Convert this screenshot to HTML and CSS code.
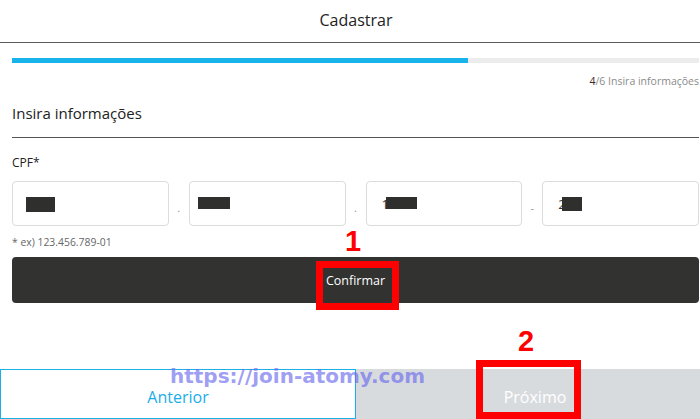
FILE: index.html
```html
<!DOCTYPE html>
<html lang="pt">
<head>
<meta charset="utf-8">
<title>Cadastrar</title>
<link rel="stylesheet" href="styles.css">
</head>
<body>
<header class="topbar"><h1 class="title">Cadastrar</h1></header>
<main class="content">
  <div class="progress"><div class="progress-fill" style="width:66.4%"></div></div>
  <p class="step"><b>4</b>/6 Insira informações</p>
  <h2 class="section-title">Insira informações</h2>
  <label class="field-label">CPF*</label>
  <div class="cpf-row">
    <div class="cpf-box"><span class="mask m1"></span></div>
    <span class="sep">.</span>
    <div class="cpf-box"><span class="mask m2"></span></div>
    <span class="sep">.</span>
    <div class="cpf-box"><span class="digit d3">1</span><span class="mask m3"></span></div>
    <span class="sep">-</span>
    <div class="cpf-box"><span class="digit d4">2</span><span class="mask m4"></span></div>
  </div>
  <p class="hint">* ex) 123.456.789-01</p>
  <button class="confirm">Confirmar</button>
</main>
<footer class="nav">
  <button class="prev">Anterior</button>
  <button class="next">Próximo</button>
</footer>
<div class="mark n1">1</div>
<div class="mark n2">2</div>
<div class="hl h1"></div>
<div class="hl h2"></div>
<div class="watermark">https://join-atomy.com</div>
</body>
</html>
```
FILE: styles.css
```css
* { box-sizing: border-box; }
html, body { margin: 0; padding: 0; }
body {
  width: 700px;
  height: 419px;
  overflow: hidden;
  position: relative;
  display: flex;
  flex-direction: column;
  background: #fff;
  font-family: "Open Sans", "Noto Sans", sans-serif;
  color: #222;
}
.topbar {
  height: 43px;
  border-bottom: 1px solid #5a5a5a;
  display: flex;
  align-items: center;
  justify-content: center;
  padding: 0 0 3px 12px;
}
.title {
  margin: 0;
  font-size: 16px;
  font-weight: 400;
  color: #222;
}
.content {
  padding: 0 1px 0 12px;
}
.progress {
  margin-top: 15px;
  height: 5px;
  background: #ececec;
}
.progress-fill {
  height: 100%;
  background: #18b3ea;
}
.step {
  margin: 11px 0 0;
  text-align: right;
  font-size: 10.5px;
  line-height: 14px;
  color: #8a8a8a;
}
.step b { font-weight: 400; color: #3a2a2a; }
.section-title {
  margin: 15px 0 0;
  font-size: 15px;
  font-weight: 400;
  line-height: 20px;
  padding-bottom: 14px;
  border-bottom: 1px solid #555;
  color: #222;
}
.field-label {
  display: block;
  margin-top: 17px;
  font-size: 12px;
  line-height: 16px;
  color: #222;
}
.cpf-row {
  margin-top: 10px;
  height: 45px;
  display: grid;
  grid-template-columns: 1fr 20px 1fr 20px 1fr 20px 1fr;
}
.cpf-box {
  border: 1px solid #dcdcdc;
  border-radius: 4px;
  display: flex;
  align-items: center;
  padding-left: 13px;
  font-size: 13px;
  color: #333;
}
.mask { display: inline-block; background: #2f2f2d; }
.m1 { width: 29px; height: 15px; margin-top: 2px; }
.m2 { width: 32px; height: 12px; margin-left: -5px; margin-top: -1px; }
.m3 { width: 31px; height: 12px; margin-left: -3px; margin-top: -1px; }
.m4 { width: 20px; height: 14px; margin-left: -4px; }
.digit { line-height: 14px; }
.d3 { margin-left: 2px; }
.d4 { margin-left: 2px; }
.sep {
  display: flex;
  align-items: center;
  justify-content: center;
  padding-top: 8px;
  font-size: 11px;
  color: #999;
}
.hint {
  margin: 9px 0 0;
  font-size: 10.4px;
  line-height: 14px;
  color: #666;
}
.confirm {
  display: block;
  width: 100%;
  height: 46px;
  margin-top: 8px;
  background: #323230;
  color: #fff;
  border: none;
  border-radius: 4px;
  font-family: "Open Sans", "Noto Sans", sans-serif;
  font-size: 12.5px;
  padding: 1px 0 0;
}
.nav {
  margin-top: auto;
  height: 50px;
  display: grid;
  grid-template-columns: 356px 1fr;
}
.nav button {
  font-family: "Open Sans", "Noto Sans", sans-serif;
  font-size: 16px;
  padding: 6px 0 0;
  margin: 0;
}
.prev {
  background: #fff;
  border: 1px solid #1cb0e8;
  color: #1aaee8;
}
.next {
  background: #d8dbde;
  border: none;
  color: #fff;
  padding-left: 14px !important;
}
.mark {
  position: absolute;
  color: #f00;
  font-family: "Liberation Sans", Arial, sans-serif;
  font-weight: 700;
  font-size: 29px;
  line-height: 1;
}
.n1 { left: 345px; top: 227px; }
.n2 { left: 518px; top: 327px; }
.hl {
  position: absolute;
  border: 7px solid #f00;
}
.h1 { left: 316px; top: 261px; width: 83px; height: 49px; }
.h2 { left: 476px; top: 360px; width: 105px; height: 59px; }
.watermark {
  position: absolute;
  left: 170px;
  top: 364px;
  font-family: "DejaVu Sans", sans-serif;
  font-weight: 700;
  font-size: 20px;
  color: rgba(110, 110, 238, 0.68);
  white-space: nowrap;
}
```
